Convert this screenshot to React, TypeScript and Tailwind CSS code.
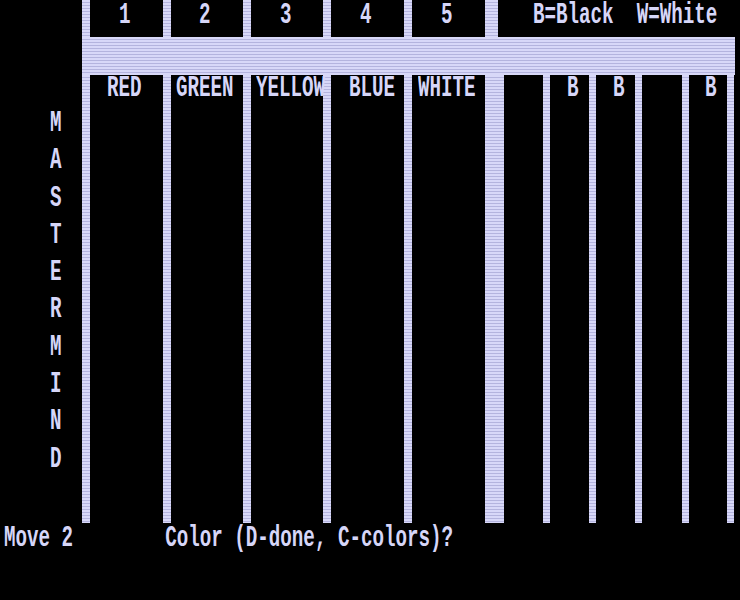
// Mastermind board on a 64-column phosphor text screen
const phos =
  "bg-[image:repeating-linear-gradient(180deg,#d8d8f8_0px,#d8d8f8_2px,#b4b4de_2px,#b4b4de_3px)]";

function Txt({ children }: { children: string }) {
  return (
    <span className="block origin-top scale-y-150 whitespace-pre leading-[12px]">
      {children}
    </span>
  );
}

function Bar({ w }: { w: string }) {
  return <div className={`${w} shrink-0 ${phos}`} />;
}

const colors = [
  { num: "1", name: "RED", w: "w-[73px]", numPad: "pl-[29px]", namePad: "pl-[17px]" },
  { num: "2", name: "GREEN", w: "w-[72px]", numPad: "pl-[28px]", namePad: "pl-[5px]" },
  { num: "3", name: "YELLOW", w: "w-[72px]", numPad: "pl-[29px]", namePad: "pl-[5px]" },
  { num: "4", name: "BLUE", w: "w-[73px]", numPad: "pl-[29px]", namePad: "pl-[18px]" },
  { num: "5", name: "WHITE", w: "w-[73px]", numPad: "pl-[29px]", namePad: "pl-[6px]" },
];

// score pegs to the right of the divider: gap width, label shown or not
const pegs = [
  { w: "w-[39px]", label: "", pad: "" },
  { w: "w-[39px]", label: "B", pad: "pl-[17px]" },
  { w: "w-[39px]", label: "B", pad: "pl-[17px]" },
  { w: "w-[40px]", label: "", pad: "" },
  { w: "w-[38px]", label: "B", pad: "pl-[16px]" },
];

export default function App() {
  return (
    <div className="w-[740px] h-[600px] bg-black overflow-hidden flex flex-col font-['Liberation_Mono',monospace] font-bold text-[19.2px] text-[#d6d6f8]">
      {/* column numbers + legend */}
      <div className="flex h-[37px] shrink-0">
        <div className="w-[82px] shrink-0" />
        {colors.map((c) => (
          <div key={c.num} className="flex">
            <Bar w="w-[8px]" />
            <div className={`${c.w} shrink-0 ${c.numPad} pt-[6px]`}>
              <Txt>{c.num}</Txt>
            </div>
          </div>
        ))}
        <Bar w="w-[13px]" />
        <div className="flex-1 pl-[35px] pt-[6px]">
          <Txt>{"B=Black  W=White"}</Txt>
        </div>
      </div>

      <div className={`ml-[82px] w-[653px] h-[38px] shrink-0 ${phos}`} />

      {/* board */}
      <div className="flex h-[448px] shrink-0">
        <div className="w-[82px] shrink-0 pl-[50px] pt-[39px] flex flex-col">
          {"MASTERMIND".split("").map((ch, i) => (
            <div key={i} className="h-[37.3px]">
              <Txt>{ch}</Txt>
            </div>
          ))}
        </div>
        {colors.map((c) => (
          <div key={c.name} className="flex">
            <Bar w="w-[8px]" />
            <div className={`${c.w} shrink-0 ${c.namePad} pt-[4px]`}>
              <Txt>{c.name}</Txt>
            </div>
          </div>
        ))}
        <Bar w="w-[19px]" />
        {pegs.map((p, i) => (
          <div key={i} className="flex">
            <div className={`${p.w} shrink-0 ${p.pad} pt-[4px]`}>
              {p.label && <Txt>{p.label}</Txt>}
            </div>
            <Bar w="w-[7px]" />
          </div>
        ))}
      </div>

      <div className="flex-1 pl-[4px] pt-[6px]">
        <Txt>{"Move 2        Color (D-done, C-colors)?"}</Txt>
      </div>
    </div>
  );
}
